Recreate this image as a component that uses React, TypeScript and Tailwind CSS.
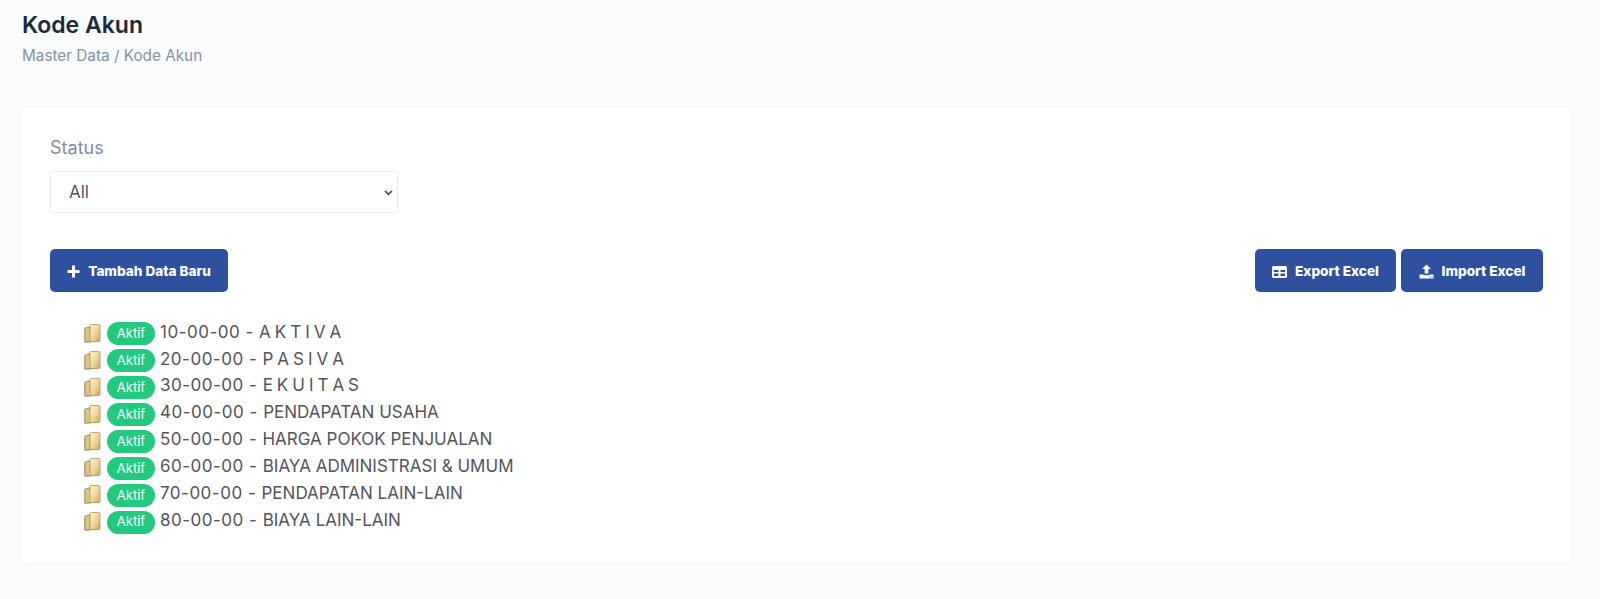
const rows = [
  ["10-00-00 - ", "A K T I V A"],
  ["20-00-00 - ", "P A S I V A"],
  ["30-00-00 - ", "E K U I T A S"],
  ["40-00-00 - ", "PENDAPATAN USAHA"],
  ["50-00-00 - ", "HARGA POKOK PENJUALAN"],
  ["60-00-00 - ", "BIAYA ADMINISTRASI & UMUM"],
  ["70-00-00 - ", "PENDAPATAN LAIN-LAIN"],
  ["80-00-00 - ", "BIAYA LAIN-LAIN"],
];

function Folder({ id }: { id: number }) {
  return (
    <svg width="21" height="21" viewBox="0 0 21 21" className="mt-[2px] shrink-0">
      <defs>
        <linearGradient id={`f${id}`} x1="0" y1="0" x2="1" y2="1">
          <stop offset="0" stopColor="#fff4cc" />
          <stop offset="0.55" stopColor="#ecd596" />
          <stop offset="1" stopColor="#c9a55c" />
        </linearGradient>
      </defs>
      <path d="M2 6 L9 2 H17 V18 L6 20 H2 Z" fill="#b0a994" opacity="0.8" />
      <rect x="3" y="4.5" width="6.5" height="14" rx="1" fill="#dcc484" stroke="#a58d55" strokeWidth="0.7" />
      <rect x="8" y="1.5" width="10" height="17" rx="1.2" fill={`url(#f${id})`} stroke="#ad9358" strokeWidth="0.8" />
    </svg>
  );
}

function PlusIcon() {
  return (
    <svg width="13" height="13" viewBox="0 0 13 13" fill="white">
      <path d="M5 0.5 H8 V5 H12.5 V8 H8 V12.5 H5 V8 H0.5 V5 H5 Z" />
    </svg>
  );
}

function TableIcon() {
  return (
    <svg width="15" height="12" viewBox="0 0 15 12" fill="white">
      <path
        fillRule="evenodd"
        d="M1.5 0 H13.5 A1.5 1.5 0 0 1 15 1.5 V10.5 A1.5 1.5 0 0 1 13.5 12 H1.5 A1.5 1.5 0 0 1 0 10.5 V1.5 A1.5 1.5 0 0 1 1.5 0 Z M2 4 V6 H6.5 V4 Z M8.5 4 V6 H13 V4 Z M2 7.5 V10 H6.5 V7.5 Z M8.5 7.5 V10 H13 V7.5 Z"
      />
    </svg>
  );
}

function UploadIcon() {
  return (
    <svg width="15" height="15" viewBox="0 0 15 15" fill="white">
      <path d="M7.5 0.5 L12 5 H9.3 V9.5 H5.7 V5 H3 Z" />
      <path
        fillRule="evenodd"
        d="M0.5 10.5 H4.5 V11.3 H10.5 V10.5 H14.5 V14.5 H0.5 Z M10.5 12.4 V13.4 H11.5 V12.4 Z M12.5 12.4 V13.4 H13.5 V12.4 Z"
      />
    </svg>
  );
}

const btn =
  "flex h-[43px] items-center justify-center gap-[8px] rounded-[5px] bg-[#2f509e] pt-[2px] text-[13.6px] font-extrabold text-white";

export default function App() {
  return (
    <div className="min-h-[599px] bg-[#f9fbfd] pl-[22px] pr-[29px] pt-[12px] font-['Inter','Liberation_Sans',sans-serif]">
      <h1 className="text-[23px] font-semibold leading-[26px] text-[#1b2a3d]">Kode Akun</h1>
      <p className="mt-[8px] text-[15.3px] leading-[20px] text-[#8492a6]">Master Data / Kode Akun</p>
      <div className="mt-[41px] h-[456px] rounded-[6px] bg-white px-[28px] pt-[29px] shadow-[0_1px_3px_rgba(50,60,90,0.04)]">
        <label className="block text-[18px] leading-[24px] text-[#848a9c]">Status</label>
        <div className="relative mt-[11px] flex h-[42px] w-[348px] items-center rounded-[3px] border border-[#e8ebf0] pl-[18px] pt-[1px] text-[17px] text-[#4f5467]">
          All
          <svg width="9" height="6" viewBox="0 0 10 7" className="absolute right-[4px] top-[18px]" fill="none" stroke="#4a4f63" strokeWidth="2">
            <path d="M1 1 L5 5 L9 1" />
          </svg>
        </div>
        <div className="mt-[36px] flex items-start justify-between">
          <button className={`${btn} w-[178px]`}>
            <PlusIcon />
            Tambah Data Baru
          </button>
          <div className="flex gap-[5px]">
            <button className={`${btn} w-[141px]`}>
              <TableIcon />
              Export Excel
            </button>
            <button className={`${btn} w-[142px]`}>
              <UploadIcon />
              Import Excel
            </button>
          </div>
        </div>
        <ul className="mt-[27px] pl-[32px]">
          {rows.map(([code, name], i) => (
            <li key={code} className="flex h-[26.9px] items-center whitespace-pre text-[17px] text-[#54545c]">
              <Folder id={i} />
              <span className="ml-[4px] mr-[5px] mt-[3px] flex h-[23px] w-[48px] items-center justify-center rounded-full bg-[#22c97f] text-[13px] text-white">
                Aktif
              </span>
              <span className="tracking-[0.5px]">{code}</span>
              <span className={i < 3 ? "[word-spacing:-0.8px]" : ""}>{name}</span>
            </li>
          ))}
        </ul>
      </div>
    </div>
  );
}
